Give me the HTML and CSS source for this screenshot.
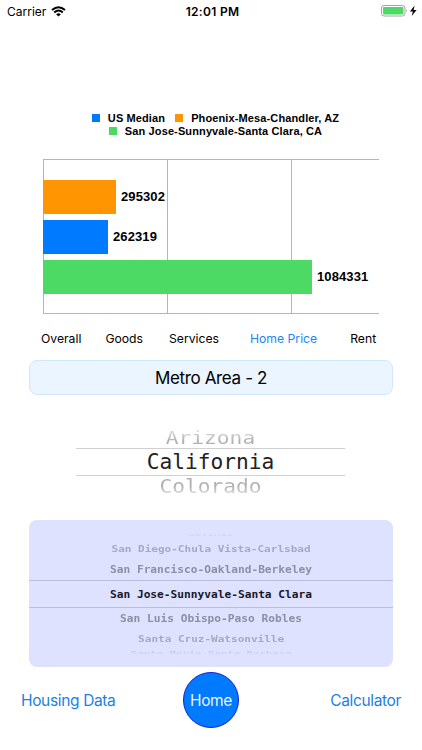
FILE: index.html
```html
<!DOCTYPE html>
<html lang="en">
<head>
    <meta charset="UTF-8">
    <meta name="viewport" content="width=device-width, initial-scale=1.0">
    <title>Cost of Living</title>
    <link rel="stylesheet" href="styles.css">
</head>
<body>
    <header class="status-bar">
        <div class="carrier">
            <span>Carrier</span>
            <svg class="wifi" width="15" height="11" viewBox="0 0 15 11">
                <path d="M1 4.1 Q7.5 -1.7 14 4.1" fill="none" stroke="#000" stroke-width="2"/>
                <path d="M3.2 6.5 Q7.5 2.7 11.8 6.5" fill="none" stroke="#000" stroke-width="1.9"/>
                <path d="M5.1 8.2 Q7.5 6.3 9.9 8.2 L7.5 10.6 Z"/>
            </svg>
        </div>
        <div class="time">12:01 PM</div>
        <div class="power">
            <svg width="36" height="12" viewBox="0 0 36 12">
                <rect x="0.5" y="0.5" width="23.5" height="10.5" rx="2.5" fill="#fff" stroke="#a5a5a5"/>
                <rect x="2" y="2" width="20.5" height="7.5" rx="1" fill="#4cd964"/>
                <path d="M25 4 Q26.6 5.7 25 7.5 Z" fill="#999"/>
                <path d="M33.6 0.6 L29 6.5 H31.9 L30.7 11 L35.6 5 H32.6 Z"/>
            </svg>
        </div>
    </header>

    <main class="content">
        <div class="legend">
            <div class="legend-row">
                <span class="swatch blue"></span><span class="key">US Median</span>
                <span class="swatch orange"></span><span>Phoenix-Mesa-Chandler, AZ</span>
            </div>
            <div class="legend-row">
                <span class="swatch green"></span><span>San Jose-Sunnyvale-Santa Clara, CA</span>
            </div>
        </div>

        <div class="chart">
            <div class="bar-row"><div class="bar orange" style="width: 73px"></div><span>295302</span></div>
            <div class="bar-row"><div class="bar blue" style="width: 65px"></div><span>262319</span></div>
            <div class="bar-row"><div class="bar green" style="width: 269px"></div><span>1084331</span></div>
        </div>

        <nav class="tabs">
            <a>Overall</a>
            <a>Goods</a>
            <a>Services</a>
            <a class="active">Home Price</a>
            <a>Rent</a>
        </nav>

        <div class="metro-title">Metro Area - 2</div>

        <div class="state-picker">
            <div class="state above">Arizona</div>
            <div class="state selected">California</div>
            <div class="state below">Colorado</div>
        </div>

        <div class="city-picker">
            <div class="city edge top"><span>Salinas</span></div>
            <div class="city far"><span>San Diego-Chula Vista-Carlsbad</span></div>
            <div class="city near"><span>San Francisco-Oakland-Berkeley</span></div>
            <div class="city chosen"><span>San Jose-Sunnyvale-Santa Clara</span></div>
            <div class="city near"><span>San Luis Obispo-Paso Robles</span></div>
            <div class="city far"><span>Santa Cruz-Watsonville</span></div>
            <div class="city edge bottom"><span>Santa Maria-Santa Barbara</span></div>
        </div>
    </main>

    <footer class="bottom-nav">
        <a class="housing">Housing Data</a>
        <a class="home">Home</a>
        <a class="calculator">Calculator</a>
    </footer>
</body>
</html>
```
FILE: styles.css
```css
* {
    box-sizing: border-box;
}
body {
    margin: 0;
    height: 750px;
    overflow: hidden;
    background: white;
    color: #000;
    font-family: Inter, sans-serif;
}
.status-bar {
    display: grid;
    grid-template-columns: 1fr auto 1fr;
    align-items: center;
    height: 22px;
    padding: 0 5px 0 7px;
    font-size: 12px;
}
.carrier {
    display: flex;
    align-items: center;
    gap: 5px;
}
.carrier span {
    width: 39px;
}
.time {
    padding-left: 1px;
    font-weight: 600;
    letter-spacing: 0.3px;
}
.power {
    display: flex;
    justify-content: flex-end;
}
.content {
    padding: 90px 29px 0;
}
.legend {
    height: 47px;
    padding-left: 9px;
    font: bold 11px/13px "Liberation Sans", sans-serif;
    letter-spacing: 0.12px;
}
.legend-row {
    display: flex;
    justify-content: center;
    align-items: center;
    white-space: nowrap;
}
.swatch {
    width: 8px;
    height: 8px;
    margin: 0 8px 1px 0;
}
.key {
    margin-right: 10px;
}
.orange {
    background-color: #ff9500;
}
.blue {
    background-color: #007aff;
}
.green {
    background-color: #4cd964;
}
.chart {
    display: flex;
    flex-direction: column;
    gap: 6px;
    width: 336px;
    height: 155px;
    margin-left: 14px;
    padding-top: 20px;
    border-top: 1px solid #b5b5b5;
    border-bottom: 1px solid #b5b5b5;
    background: repeating-linear-gradient(to right, #b5b5b5 0 1px, transparent 1px 124px);
}
.bar-row {
    display: flex;
    align-items: center;
    gap: 5px;
    height: 34px;
    font: bold 13px "Liberation Sans", sans-serif;
    letter-spacing: 0.1px;
}
.bar-row span {
    padding-bottom: 1px;
}
.bar {
    height: 34px;
}
.tabs {
    display: flex;
    align-items: center;
    height: 46px;
    padding: 3px 0 0 12px;
    font-size: 12.2px;
    white-space: nowrap;
}
.tabs a {
    margin-right: 24px;
}
.tabs a:nth-child(2) {
    margin-right: 26px;
}
.tabs a:nth-child(3) {
    margin-right: 31px;
}
.tabs .active {
    margin-right: 33px;
    color: #1b86f3;
}
.metro-title {
    height: 35px;
    border: 1px solid #d0e8fa;
    border-radius: 8px;
    background: #eaf5ff;
    font-size: 17px;
    letter-spacing: -0.35px;
    line-height: 35px;
    text-align: center;
}
.state-picker {
    width: 269px;
    height: 125px;
    margin-left: 47px;
    padding-top: 27px;
    font: 21.2px "DejaVu Sans Mono", monospace;
    text-align: center;
}
.state {
    height: 26px;
    line-height: 26px;
}
.state.above, .state.below {
    color: transparent;
    background-clip: text;
    -webkit-background-clip: text;
}
.state.above {
    transform: translateY(3px) scaleY(0.86);
    background-image: linear-gradient(#ddd 15%, #b0b0b0 65%);
}
.state.below {
    transform: translateY(-2px) scaleY(0.88);
    background-image: linear-gradient(#b0b0b0 45%, #ddd 85%);
}
.state.selected {
    height: 28px;
    border-top: 1px solid #d0d0d0;
    border-bottom: 1px solid #d0d0d0;
    color: #222;
}
.city-picker {
    height: 147px;
    padding-top: 9px;
    border-radius: 8px;
    background: #dee2ff;
    font: bold 11.2px "DejaVu Sans Mono", monospace;
    text-align: center;
    overflow: hidden;
}
.city {
    display: flex;
    justify-content: center;
    align-items: center;
    white-space: nowrap;
}
.city.edge {
    height: 11px;
    color: transparent;
}
.city.edge span {
    transform: scale(0.955, 0.45);
    background-clip: text;
    -webkit-background-clip: text;
}
.city.top span {
    background-image: linear-gradient(#dee2ff 35%, #c4c8e2);
}
.city.bottom span {
    background-image: linear-gradient(#bcc0da, #dee2ff 75%);
}
.city.far {
    height: 18px;
    color: #a6a9c0;
}
.city.far span {
    transform: scale(0.985, 0.78);
}
.city.near {
    height: 22px;
    color: #8c90a5;
}
.city.near span {
    transform: scaleY(0.96);
}
.city.chosen {
    height: 28px;
    border-top: 1px solid #b9bdd8;
    border-bottom: 1px solid #b9bdd8;
    color: #17192a;
}
.city.chosen + .near {
    padding-bottom: 1px;
}
.bottom-nav {
    display: grid;
    grid-template-columns: 1fr 56px 1fr;
    align-items: center;
    padding: 5px 21px 0;
    color: #1b7fe5;
    font-size: 15.5px;
    letter-spacing: -0.35px;
}
.home {
    height: 56px;
    border: 1px solid #1420d8;
    border-radius: 50%;
    background: #007aff;
    color: #eaf5ff;
    line-height: 56px;
    text-align: center;
}
.calculator {
    text-align: right;
}
```
